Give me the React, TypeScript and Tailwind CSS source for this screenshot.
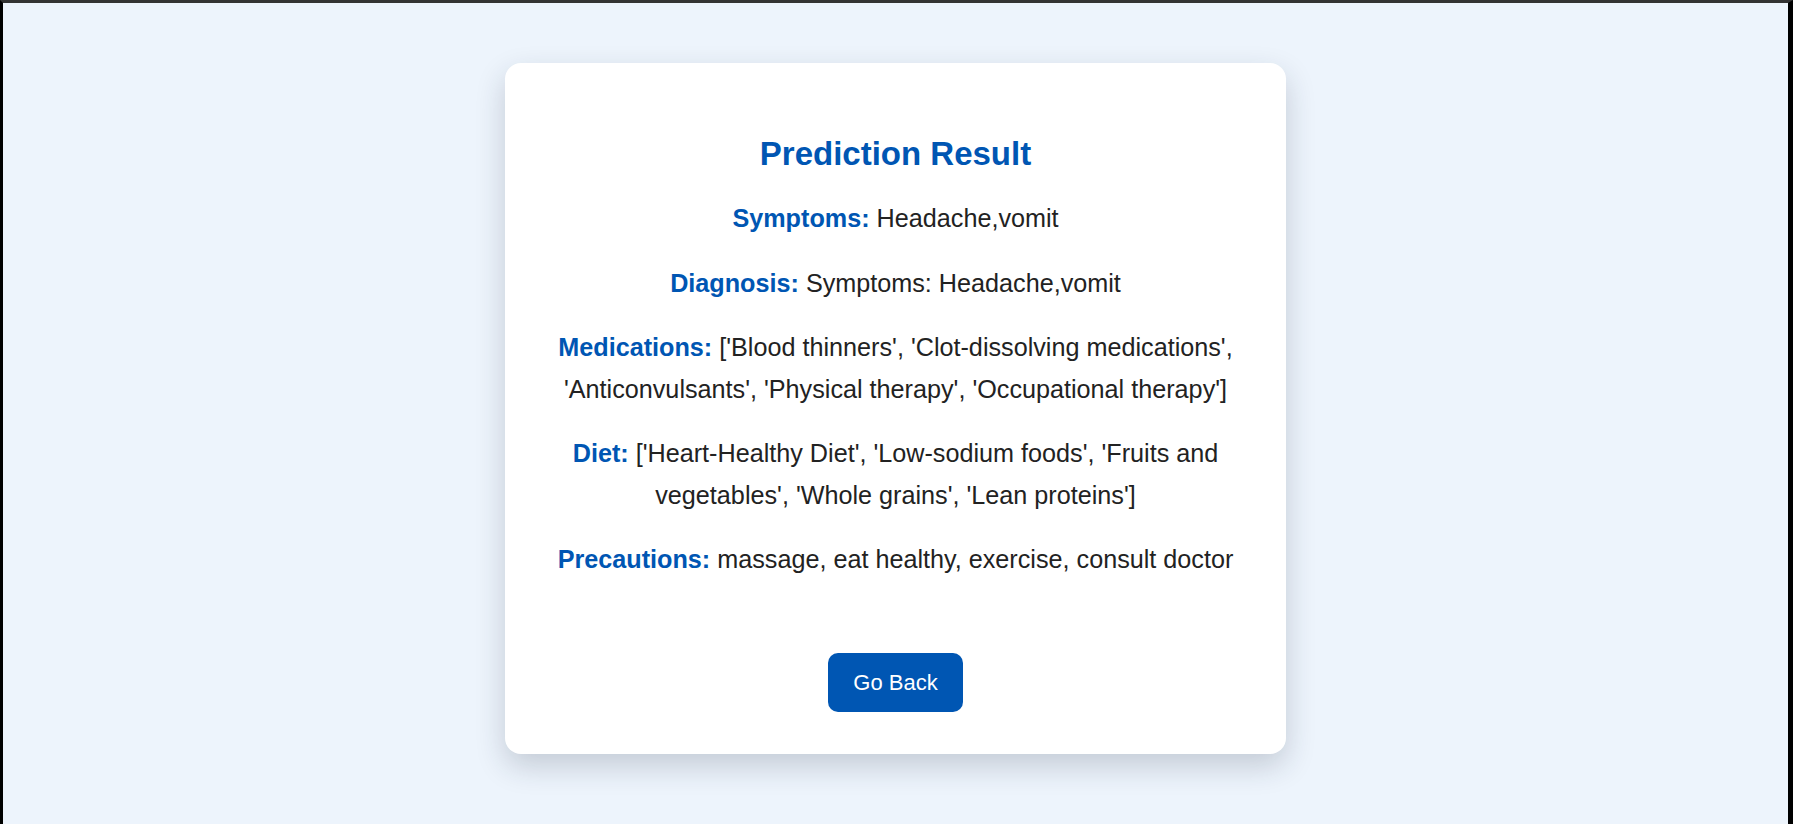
const rows = [
  { label: 'Symptoms:', value: 'Headache,vomit' },
  { label: 'Diagnosis:', value: 'Symptoms: Headache,vomit' },
  {
    label: 'Medications:',
    value:
      "['Blood thinners', 'Clot-dissolving medications', 'Anticonvulsants', 'Physical therapy', 'Occupational therapy']",
  },
  {
    label: 'Diet:',
    value: "['Heart-Healthy Diet', 'Low-sodium foods', 'Fruits and vegetables', 'Whole grains', 'Lean proteins']",
  },
  { label: 'Precautions:', value: 'massage, eat healthy, exercise, consult doctor' },
];

export default function App() {
  return (
    <div className="h-[824px] border-t-[3px] border-l-[3px] border-r-[5px] border-t-[#333] border-l-black border-r-black bg-[#edf4fc] font-['Liberation_Sans',Arial,sans-serif]">
      <div className="flex justify-center pt-[60px]">
        <div className="w-[781px] rounded-2xl bg-white px-[42px] pt-[72px] pb-[42px] text-center shadow-[0_12px_30px_rgba(30,40,60,0.2)]">
          {/* Title */}
          <h2 className="mb-[25px] text-[33px] leading-[38px] font-bold text-[#0056b3]">
            Prediction Result
          </h2>

          {/* Result rows */}
          <div className="flex flex-col gap-[23px]">
            {rows.map((r) => (
              <p key={r.label} className="text-[25.2px] leading-[41.5px] text-[#222]">
                <strong className="text-[#0056b3]">{r.label}</strong> {r.value}
              </p>
            ))}
          </div>

          <div className="mt-[72px] flex justify-center">
            <button className="rounded-[10px] bg-[#0056b3] px-[25px] py-[16px] text-[22px] leading-[27px] text-white">
              Go Back
            </button>
          </div>
        </div>
      </div>
    </div>
  );
}
